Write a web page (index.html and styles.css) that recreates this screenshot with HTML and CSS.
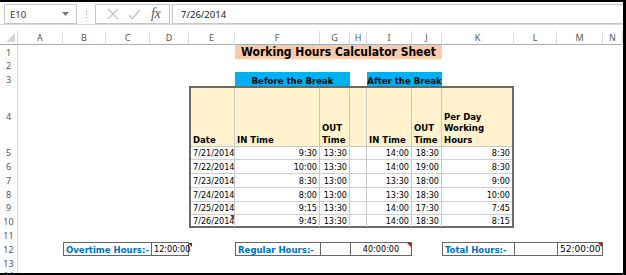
FILE: index.html
```html
<!DOCTYPE html>
<html>
<head>
<meta charset="utf-8">
<link rel="stylesheet" href="styles.css">
</head>
<body>
<div class="window">
  <div class="fbar">
    <div class="namebox"><span>E10</span><svg class="dd" width="7" height="4" viewBox="0 0 7 4"><path d="M0 0H7L3.5 4Z" fill="#777"/></svg></div>
    <div class="dots"><i></i><i></i><i></i></div>
    <div class="fbtns">
      <svg width="12" height="12" viewBox="0 0 12 12"><path d="M1 1L11 11M11 1L1 11" stroke="#c4c4c4" stroke-width="1.3" fill="none"/></svg>
      <svg width="13" height="11" viewBox="0 0 13 11"><path d="M1 6L4.5 9.5L12 1" stroke="#c4c4c4" stroke-width="1.5" fill="none"/></svg>
      <span class="fx">fx</span>
    </div>
    <div class="finput">7/26/2014</div>
  </div>
  <div class="sheet">
    <div class="corner"><svg width="9" height="9" viewBox="0 0 9 9"><path d="M9 0V9H0Z" fill="#d6d6d6"/></svg></div>
    <div class="ch">A</div><div class="ch">B</div><div class="ch">C</div><div class="ch">D</div><div class="ch">E</div><div class="ch">F</div><div class="ch">G</div><div class="ch">H</div><div class="ch">I</div><div class="ch">J</div><div class="ch">K</div><div class="ch">L</div><div class="ch">M</div><div class="ch">N</div>
    <div class="rh">1</div><div class="rh">2</div><div class="rh">3</div><div class="rh">4</div><div class="rh">5</div><div class="rh">6</div><div class="rh">7</div><div class="rh">8</div><div class="rh">9</div><div class="rh">10</div><div class="rh">11</div><div class="rh">12</div><div class="rh">13</div><div class="rh rh-cut">14</div>

    <div class="title">Working Hours Calculator Sheet</div>
    <div class="band band-before">Before the Break</div>
    <div class="band band-after">After the Break</div>

    <div class="tbl">
      <div class="th">Date</div><div class="th">IN Time</div><div class="th">OUT Time</div><div class="th"></div><div class="th">IN Time</div><div class="th">OUT Time</div><div class="th last">Per Day Working Hours</div>

      <div class="td">7/21/2014</div><div class="td r">9:30</div><div class="td r">13:30</div><div class="td"></div><div class="td r">14:00</div><div class="td r">18:30</div><div class="td r last">8:30</div>
      <div class="td">7/22/2014</div><div class="td r">10:00</div><div class="td r">13:30</div><div class="td"></div><div class="td r">14:00</div><div class="td r">19:00</div><div class="td r last">8:30</div>
      <div class="td">7/23/2014</div><div class="td r">8:30</div><div class="td r">13:00</div><div class="td"></div><div class="td r">13:30</div><div class="td r">18:00</div><div class="td r last">9:00</div>
      <div class="td">7/24/2014</div><div class="td r">8:00</div><div class="td r">13:00</div><div class="td"></div><div class="td r">13:30</div><div class="td r">18:30</div><div class="td r last">10:00</div>
      <div class="td">7/25/2014</div><div class="td r">9:15</div><div class="td r">13:30</div><div class="td"></div><div class="td r">14:00</div><div class="td r">17:30</div><div class="td r last">7:45</div>
      <div class="td bot note">7/26/2014</div><div class="td r bot">9:45</div><div class="td r bot">13:30</div><div class="td bot"></div><div class="td r bot">14:00</div><div class="td r bot">18:30</div><div class="td r bot last">8:15</div>
    </div>

    <div class="box box-ot">
      <div class="lbl">Overtime Hours:-</div>
      <div class="val c note">12:00:00</div>
    </div>
    <div class="box box-reg">
      <div class="lbl">Regular Hours:-</div>
      <div class="val"></div>
      <div class="val c note">40:00:00</div>
    </div>
    <div class="box box-tot">
      <div class="lbl">Total Hours:-</div>
      <div class="val"></div>
      <div class="val r wide note">52:00:00</div>
    </div>
  </div>
</div>
</body>
</html>
```
FILE: styles.css
```css
html, body { margin: 0; padding: 0; background: #fff; }

.window {
  width: 626px;
  height: 275px;
  box-sizing: border-box;
  border-top: 2px solid #000;
  border-right: 3px solid #000;
  border-bottom: 2px solid #000;
  overflow: hidden;
  background: #fff;
  font-family: "DejaVu Sans Condensed", "DejaVu Sans", sans-serif;
  font-size: 9px;
  color: #000;
}

/* formula bar */
.fbar {
  display: flex;
  align-items: center;
  height: 23px;
  padding: 2px 0 0 4px;
  box-sizing: border-box;
  border-bottom: 1px solid #dadada;
}
.namebox {
  width: 73px;
  height: 20px;
  box-sizing: border-box;
  border: 1px solid #c6c6c6;
  display: flex;
  align-items: center;
  justify-content: space-between;
  padding: 0 7px 0 5px;
  font-family: "Noto Sans", sans-serif;
  font-size: 9.5px;
  color: #333;
}
.dots {
  width: 18px;
  display: flex;
  flex-direction: column;
  align-items: center;
  gap: 2px;
}
.dots i { width: 1px; height: 1px; background: #888; display: block; }
.fbtns {
  width: 75px;
  height: 20px;
  box-sizing: border-box;
  border: 1px solid #c6c6c6;
  display: flex;
  align-items: center;
  justify-content: space-around;
  padding: 0 4px 0 6px;
}
.fx {
  font-family: "Liberation Serif", serif;
  font-style: italic;
  font-size: 14px;
  color: #555;
  letter-spacing: -0.5px;
}
.finput {
  flex: 1;
  margin-left: 2px;
  height: 20px;
  box-sizing: border-box;
  border: 1px solid #c6c6c6;
  border-right: none;
  display: flex;
  align-items: center;
  padding-left: 8px;
  font-family: "Noto Sans", sans-serif;
  font-size: 9.5px;
  color: #222;
}

/* sheet grid */
.sheet {
  margin-top: 6px;
  display: grid;
  grid-template-columns: 18px 45px 43px 44px 39px 46px 85px 30px 17px 45px 30px 72px 43px 46px 1fr;
  grid-template-rows: 14px 14px 13px 14px 60px 13px 14px 14px 14px 13px 14px 14px 14px 14px 14px;
}
.corner {
  grid-column: 1;
  border-right: 1px solid #d4d4d4;
  border-bottom: 1px solid #ababab;
  display: flex;
  align-items: flex-end;
  justify-content: flex-end;
  padding: 0 2px 2px 0;
}
.ch {
  border-right: 1px solid #dcdcdc;
  border-bottom: 1px solid #ababab;
  display: flex;
  align-items: center;
  justify-content: center;
  font-family: "Noto Sans", sans-serif;
  font-size: 9px;
  color: #555;
}
.rh {
  grid-column: 1;
  border-right: 1px solid #d4d4d4;
  display: flex;
  align-items: center;
  justify-content: center;
  font-family: "Noto Sans", sans-serif;
  font-size: 9px;
  color: #555;
}
.rh-cut { align-items: flex-start; line-height: 9px; padding-top: 1px; }

.title {
  grid-column: 7 / 12;
  grid-row: 2;
  background: #f8cbad;
  font-weight: bold;
  font-size: 12px;
  display: flex;
  align-items: center;
  justify-content: center;
}
.band {
  grid-row: 4;
  background: #00b0f0;
  font-weight: bold;
  font-size: 9.5px;
  display: flex;
  align-items: flex-end;
  justify-content: center;
}
.band-before { grid-column: 7 / 9; }
.band-after { grid-column: 10 / 12; white-space: nowrap; }

/* data table */
.tbl {
  grid-column: 6 / 13;
  grid-row: 5 / 12;
  box-sizing: border-box;
  border: 2px solid #6a6a6a;
  display: grid;
  grid-template-columns: 44px 85px 30px 17px 45px 30px 1fr;
  grid-template-rows: 59px 13px 14px 14px 14px 13px 1fr;
}
.th {
  background: #fff2cc;
  font-weight: bold;
  font-size: 9.5px;
  line-height: 11.5px;
  border-right: 1px solid #c8c8c8;
  border-bottom: 1px solid #c8c8c8;
  display: flex;
  align-items: flex-end;
  padding: 0 2px 1px 2px;
}
.td {
  border-right: 1px solid #c8c8c8;
  border-bottom: 1px solid #cfcfcf;
  display: flex;
  align-items: flex-end;
  padding: 0 2px;
  font-size: 9px;
  line-height: 12px;
  white-space: nowrap;
  position: relative;
}
.td.r { justify-content: flex-end; }
.last { border-right: none; }
.bot { border-bottom: none; }

.note::after {
  content: "";
  position: absolute;
  top: 0;
  right: 0;
  border-top: 4px solid #e00000;
  border-left: 4px solid transparent;
}

/* summary boxes */
.box {
  grid-row: 13;
  box-sizing: border-box;
  border: 1px solid #666;
  display: grid;
  background: #fff;
}
.box-ot { grid-column: 3 / 6; grid-template-columns: 87px 1fr; }
.box-reg { grid-column: 7 / 11; grid-template-columns: 84px 30px 1fr; }
.box-tot { grid-column: 12 / 15; grid-template-columns: 71px 43px 1fr; }
.lbl {
  color: #0070c0;
  font-weight: bold;
  font-size: 9.5px;
  display: flex;
  align-items: center;
  padding-left: 2px;
  white-space: nowrap;
}
.val {
  border-left: 1px solid #666;
  display: flex;
  align-items: center;
  padding: 0 2px;
  font-size: 9px;
  position: relative;
}
.val.c { justify-content: center; }
.val.r { justify-content: flex-end; }
.val.wide { font-family: "DejaVu Sans", sans-serif; font-size: 9px; }
```
